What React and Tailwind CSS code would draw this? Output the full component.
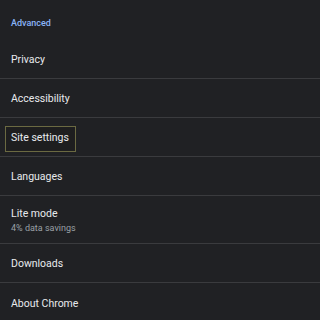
const rows = [
  { title: 'Privacy' },
  { title: 'Accessibility' },
  { title: 'Site settings', focused: true },
  { title: 'Languages' },
  { title: 'Lite mode', sub: '4% data savings' },
  { title: 'Downloads' },
  { title: 'About Chrome', last: true },
];

export default function App() {
  return (
    <div
      className="min-h-screen w-full bg-[#202124] text-[#e8eaed]"
      style={{ fontFamily: 'Roboto, "Noto Sans", sans-serif' }}
    >
      <div className="h-[40px] flex items-center pt-[6px] px-[11px]">
        <span className="text-[9px] font-medium text-[#8ab4f8] leading-none">Advanced</span>
      </div>
      {rows.map((row) => (
        <div
          key={row.title}
          className={`flex flex-col justify-center px-[11px] pt-[3px] ${row.sub ? 'h-[48px]' : 'h-[39px]'} ${row.last ? '' : 'border-b border-[#3a3b3e]'}`}
        >
          {row.focused ? (
            <div className="-mx-[6px] w-[71px] h-[26px] flex items-center px-[5px] border border-[#6b6a42] bg-[#1e1e1f]">
              <span className="text-[10.5px] leading-none whitespace-nowrap">{row.title}</span>
            </div>
          ) : (
            <span className="text-[10.5px] leading-none whitespace-nowrap">{row.title}</span>
          )}
          {row.sub && (
            <span className="mt-[4px] text-[9px] leading-none text-[#9aa0a6]">{row.sub}</span>
          )}
        </div>
      ))}
    </div>
  );
}
